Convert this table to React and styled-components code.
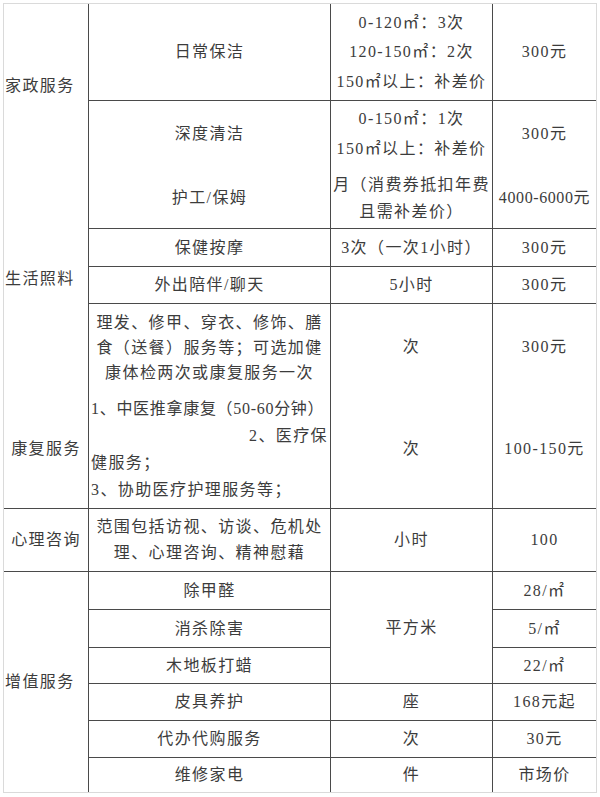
import React from 'react';
import styled, { createGlobalStyle } from 'styled-components';

const GlobalStyle = createGlobalStyle`
    html, body {
        margin: 0;
        padding: 0;
        background: #fff;
    }
    body {
        font-family: "Liberation Serif", "Noto Sans CJK SC", serif;
    }
`;

const Page = styled.div`
    width: 600px;
    box-sizing: border-box;
    padding: 3px;
`;

const Table = styled.div`
    display: grid;
    grid-template-columns: 84px 242px 162px 104px;
    grid-template-rows: 96px 67px 61px 38px 37px 87px 118px 63px 38px 38px 36px 37px 37px 35px;
    border: 1px solid #dadada;
    color: #3c3c3c;
    font-size: 16px;
    letter-spacing: 1.4px;
`;

const Cell = styled.div`
    grid-column: ${p => p.$col};
    grid-row: ${p => p.$row};
    display: flex;
    flex-direction: column;
    justify-content: center;
    align-items: ${p => (p.$align === 'left' ? 'flex-start' : 'center')};
    padding: 0 ${p => p.$pad || 0}px;
    border-left: ${p => (p.$col === 1 ? 'none' : '1px solid #4a4a4a')};
    border-top: ${p => (p.$open ? 'none' : '1px solid #4a4a4a')};
    line-height: ${p => p.$lh || 30}px;
    letter-spacing: ${p => (p.$tight ? '0.6px' : 'inherit')};
    white-space: nowrap;
`;

const Line = styled.div`
    align-self: stretch;
    text-align: ${p => p.$align || 'center'};
    letter-spacing: ${p => (p.$tight ? '0.7px' : 'inherit')};
`;

function Lines({ items, align }) {
    return items.map((t, i) => <Line key={i} $align={align}>{t}</Line>);
}

export default function App() {
    return (
        <Page>
            <GlobalStyle />
            <Table>
                {/* category column */}
                <Cell $col={1} $row="1 / span 2" $open $align="left" $pad={1}>家政服务</Cell>
                <Cell $col={1} $row="3 / span 4" $open $align="left" $pad={1}>生活照料</Cell>
                <Cell $col={1} $row="7" $open>康复服务</Cell>
                <Cell $col={1} $row="8">心理咨询</Cell>
                <Cell $col={1} $row="9 / span 6" $align="left" $pad={1}>增值服务</Cell>

                {/* 日常保洁 */}
                <Cell $col={2} $row="1" $open>日常保洁</Cell>
                <Cell $col={3} $row="1" $open $lh={29.5}>
                    <Lines items={['0-120㎡：3次', '120-150㎡：2次', '150㎡以上：补差价']} />
                </Cell>
                <Cell $col={4} $row="1" $open>300元</Cell>

                {/* 深度清洁 */}
                <Cell $col={2} $row="2">深度清洁</Cell>
                <Cell $col={3} $row="2">
                    <Lines items={['0-150㎡：1次', '150㎡以上：补差价']} />
                </Cell>
                <Cell $col={4} $row="2">300元</Cell>

                {/* 护工/保姆 */}
                <Cell $col={2} $row="3" $open>护工/保姆</Cell>
                <Cell $col={3} $row="3" $open $lh={27}>
                    <Lines items={['月（消费券抵扣年费', '且需补差价）']} />
                </Cell>
                <Cell $col={4} $row="3" $open $tight>4000-6000元</Cell>

                <Cell $col={2} $row="4">保健按摩</Cell>
                <Cell $col={3} $row="4">3次（一次1小时）</Cell>
                <Cell $col={4} $row="4">300元</Cell>

                <Cell $col={2} $row="5">外出陪伴/聊天</Cell>
                <Cell $col={3} $row="5">5小时</Cell>
                <Cell $col={4} $row="5">300元</Cell>

                <Cell $col={2} $row="6" $lh={25}>
                    <Lines items={['理发、修甲、穿衣、修饰、膳', '食（送餐）服务等；可选加健', '康体检两次或康复服务一次']} />
                </Cell>
                <Cell $col={3} $row="6">次</Cell>
                <Cell $col={4} $row="6">300元</Cell>

                {/* 康复服务 */}
                <Cell $col={2} $row="7" $open $lh={27} $pad={2}>
                    <Line $align="left" $tight>1、中医推拿康复（50-60分钟）</Line>
                    <Line $align="right">2、医疗保</Line>
                    <Line $align="left">健服务；</Line>
                    <Line $align="left">3、协助医疗护理服务等；</Line>
                </Cell>
                <Cell $col={3} $row="7" $open>次</Cell>
                <Cell $col={4} $row="7" $open>100-150元</Cell>

                {/* 心理咨询 */}
                <Cell $col={2} $row="8" $lh={26}>
                    <Lines items={['范围包括访视、访谈、危机处', '理、心理咨询、精神慰藉']} />
                </Cell>
                <Cell $col={3} $row="8">小时</Cell>
                <Cell $col={4} $row="8">100</Cell>

                {/* 增值服务 */}
                <Cell $col={2} $row="9">除甲醛</Cell>
                <Cell $col={3} $row="9 / span 3">平方米</Cell>
                <Cell $col={4} $row="9">28/㎡</Cell>

                <Cell $col={2} $row="10">消杀除害</Cell>
                <Cell $col={4} $row="10">5/㎡</Cell>

                <Cell $col={2} $row="11">木地板打蜡</Cell>
                <Cell $col={4} $row="11">22/㎡</Cell>

                <Cell $col={2} $row="12">皮具养护</Cell>
                <Cell $col={3} $row="12">座</Cell>
                <Cell $col={4} $row="12">168元起</Cell>

                <Cell $col={2} $row="13">代办代购服务</Cell>
                <Cell $col={3} $row="13">次</Cell>
                <Cell $col={4} $row="13">30元</Cell>

                <Cell $col={2} $row="14">维修家电</Cell>
                <Cell $col={3} $row="14">件</Cell>
                <Cell $col={4} $row="14">市场价</Cell>
            </Table>
        </Page>
    );
}
